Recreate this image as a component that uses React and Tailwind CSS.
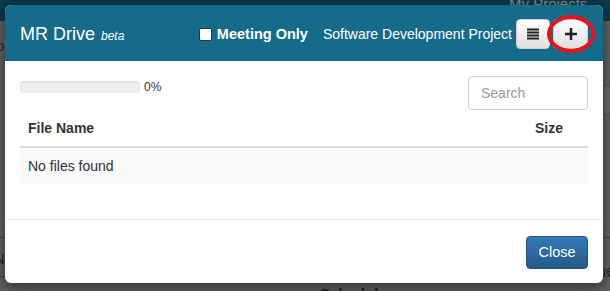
import React from "react";

const font = { fontFamily: '"Liberation Sans", Arial, sans-serif' };

function ListIcon() {
  return (
    <svg width="12" height="12" viewBox="0 0 12 12" fill="#222">
      <rect x="0" y="0.5" width="12" height="2" />
      <rect x="0" y="3.5" width="12" height="2" />
      <rect x="0" y="6.5" width="12" height="2" />
      <rect x="0" y="9.5" width="12" height="2" />
    </svg>
  );
}

function PlusIcon() {
  return (
    <svg width="12" height="12" viewBox="0 0 12 12" fill="#222">
      <rect x="4.75" y="0" width="2.5" height="12" />
      <rect x="0" y="4.75" width="12" height="2.5" />
    </svg>
  );
}

export default function App() {
  return (
    <div
      className="relative w-[610px] h-[291px] overflow-hidden bg-[#626262] text-[#333]"
      style={font}
    >
      {/* darkened page behind the modal */}
      <div className="absolute left-0 top-0 w-full h-[21px] bg-[#0c3949]" />
      <div className="absolute left-[509px] top-[-7px] text-[15px] text-[#7f8c90]">My Projects</div>
      <div className="absolute left-[603px] top-[85px] w-[8px] h-[30px] bg-[#6a6a6a] border border-[#575757]" />
      <div className="absolute left-0 top-[237px] w-full h-px bg-[#2a4a57]" />
      <div className="absolute left-0 top-[276px] w-full h-px bg-[#2a4a57]" />
      <div className="absolute left-[598px] top-[260px] text-[15px] text-[#2c2c2c]">ue</div>
      <div className="absolute left-[-6px] top-[248px] text-[15px] text-[#2c2c2c]">N</div>
      <div className="absolute left-[-4px] top-[35px] text-[15px] text-[#16323e]">o</div>
      <div className="absolute left-[320px] top-[283px] text-[15px] font-bold text-[#1c1c1c]">Schedule</div>

      {/* modal */}
      <div className="relative ml-[5px] mt-[5px] w-[598px] h-[278px] bg-white rounded-[6px] overflow-hidden shadow-[0_5px_15px_rgba(0,0,0,0.5)]">
        {/* header */}
        <div className="flex items-center h-[56px] px-[15px] pt-[2px] bg-[#156b8a] text-white">
          <div className="flex items-baseline">
            <span className="text-[18px] leading-none">MR Drive</span>
            <span className="ml-[6px] text-[12px] italic leading-none">beta</span>
          </div>
          <div className="ml-auto flex items-center">
            <span className="w-[13px] h-[13px] bg-white border border-[#333] rounded-[2px]" />
            <span className="ml-[5px] text-[14.5px] font-bold leading-none">Meeting Only</span>
            <span className="ml-[15px] text-[14px] leading-none">Software Development Project</span>
            <div className="ml-[4px] flex h-[30px] w-[34px] items-center justify-center rounded-[4px] border border-[#ccc] bg-gradient-to-b from-white to-[#e0e0e0]">
              <ListIcon />
            </div>
            <div className="relative ml-[3px] flex h-[30px] w-[35px] items-center justify-center rounded-[4px] border border-[#ccc] bg-gradient-to-b from-white to-[#e0e0e0]">
              <PlusIcon />
              <div className="absolute left-[-7px] top-[-5px] w-[48px] h-[38px] rounded-[50%] border-[4px] border-[#e5131b]" />
            </div>
          </div>
        </div>

        {/* body */}
        <div className="px-[15px] pt-[15px] pb-[15px] border-b border-[#e5e5e5]">
          <div className="flex items-start">
            <div className="mt-[5px] w-[120px] h-[12px] rounded-[4px] bg-[#ededed] shadow-[inset_0_1px_2px_rgba(0,0,0,0.1)]" />
            <span className="ml-[4px] mt-[4px] text-[12px] leading-[14px]">0%</span>
            <div className="ml-auto flex items-center w-[120px] h-[34px] px-[12px] rounded-[4px] border border-[#ccc] text-[14px] text-[#999]">
              Search
            </div>
          </div>
          <div className="mb-[20px] text-[14px]">
            <div className="flex h-[38px] items-center px-[8px] border-b-2 border-[#ddd] font-bold">
              <span>File Name</span>
              <span className="ml-auto mr-[17px]">Size</span>
            </div>
            <div className="flex h-[36px] items-center px-[8px] bg-[#f9f9f9]">No files found</div>
          </div>
        </div>

        {/* footer */}
        <div className="flex justify-end px-[15px] pt-[16px]">
          <div className="flex h-[33px] w-[62px] items-center justify-center rounded-[4px] border border-[#245580] bg-gradient-to-b from-[#337ab7] to-[#265a88] text-[14.5px] text-white">
            Close
          </div>
        </div>
      </div>
    </div>
  );
}
